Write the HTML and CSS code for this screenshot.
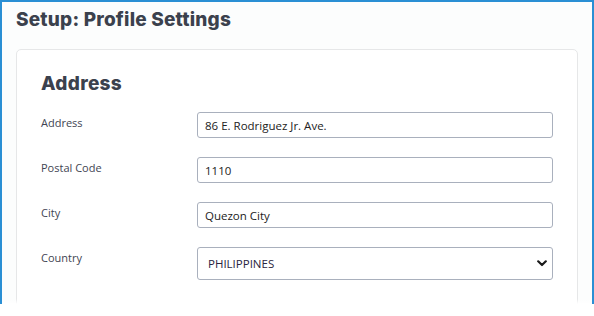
FILE: index.html
```html
<!DOCTYPE html>
<html lang="en">
<head>
  <meta charset="UTF-8">
  <meta name="viewport" content="width=device-width, initial-scale=1.0">
  <title>Setup: Profile Settings</title>
  <link rel="stylesheet" href="styles.css">
</head>
<body>

  <div class="marco">
    <h1 class="titulo">Setup: Profile Settings</h1>

    <div class="tarjeta">
      <h2>Address</h2>

      <form class="formulario">
        <label for="address">Address</label>
        <input type="text" id="address" value="86 E. Rodriguez Jr. Ave.">

        <label for="postal">Postal Code</label>
        <input type="text" id="postal" value="1110" class="violeta">

        <label for="city">City</label>
        <input type="text" id="city" value="Quezon City">

        <label for="country" class="label-select">Country</label>
        <div class="caja-select">
          <select id="country">
            <option>PHILIPPINES</option>
          </select>
          <svg class="flecha" width="10" height="7" viewBox="0 0 10 7">
            <path d="M1.2 1.3 L5 5 L8.8 1.3" fill="none" stroke="#1b1b1b" stroke-width="2.2" stroke-linecap="round" stroke-linejoin="round"/>
          </svg>
        </div>
      </form>
    </div>

    <div class="desvanecer"></div>
  </div>

</body>
</html>
```

FILE: styles.css
```css
/* --- General --- */
body {
  margin: 0;
  background: #ffffff;
  font-family: 'Open Sans', sans-serif;
  color: #3c4250;
}

/* --- Marco azul --- */
.marco {
  position: relative;
  height: 304px;
  overflow: hidden;
  border: 2px solid #2a8fd4;
  border-bottom: none;
  background: #fcfdfd;
  padding: 4px 14px 0;
  box-sizing: border-box;
}

.titulo {
  font-family: 'Inter', sans-serif;
  font-weight: 800;
  font-size: 19px;
  line-height: 28px;
  letter-spacing: 0.2px;
  color: #3b414d;
  margin: 0 0 15px;
}

/* --- Tarjeta --- */
.tarjeta {
  background: #ffffff;
  border: 1px solid #e6e7e8;
  border-radius: 5px;
  padding: 20px 24px 40px;
  height: 300px;
}

.tarjeta h2 {
  font-family: 'Inter', sans-serif;
  font-weight: 800;
  font-size: 19px;
  line-height: 28px;
  letter-spacing: 0.3px;
  color: #3b414d;
  margin: 0 0 14px;
}

/* --- Formulario --- */
.formulario {
  display: grid;
  grid-template-columns: 156px 1fr;
  row-gap: 19px;
}

label {
  font-size: 11px;
  line-height: 18px;
  padding-top: 2px;
  color: #3f4552;
}

input[type="text"], select {
  font-family: 'Open Sans', sans-serif;
  font-size: 11.5px;
  color: #222;
  height: 26px;
  border: 1px solid #a9b0bd;
  border-radius: 3px;
  padding: 0 7px;
  box-sizing: border-box;
  background: #fff;
  width: 100%;
  outline: none;
}

.violeta {
  color: #5a1f6e;
}

.caja-select {
  position: relative;
}

select {
  height: 33px;
  padding: 0 10px;
  appearance: none;
  -webkit-appearance: none;
  color: #2a2540;
}

.flecha {
  position: absolute;
  right: 6px;
  top: 13px;
}

.desvanecer {
  position: absolute;
  left: 0;
  right: 0;
  bottom: 0;
  height: 5px;
  background: linear-gradient(rgba(255,255,255,0), #ffffff);
}
```
